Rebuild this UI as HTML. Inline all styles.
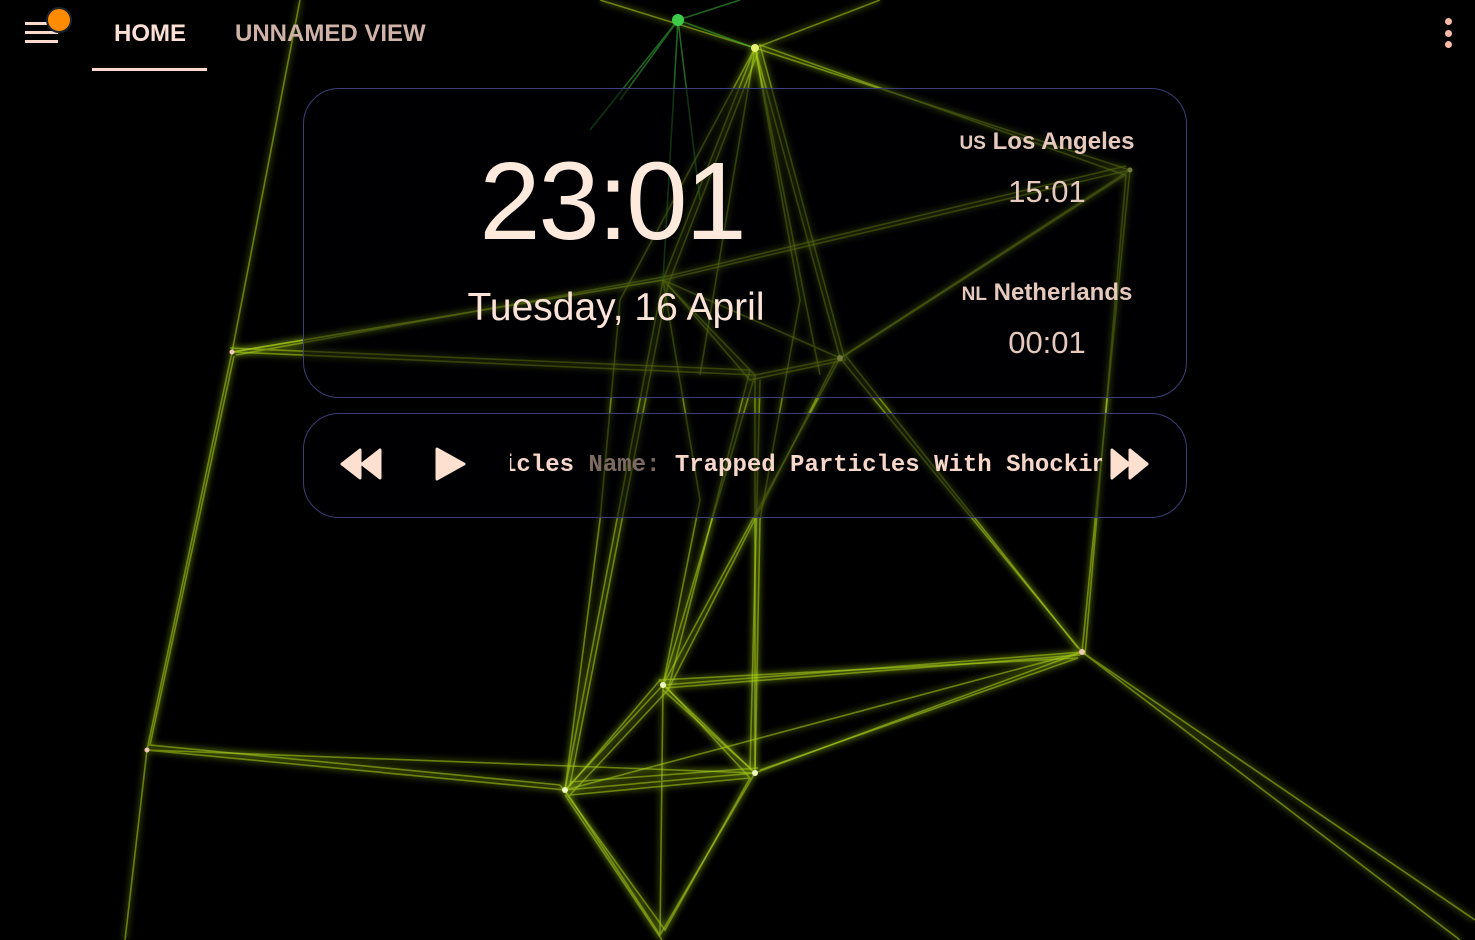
<!DOCTYPE html>
<html><head><meta charset="utf-8"><style>
html,body{margin:0;width:1475px;height:940px;background:#000;overflow:hidden;font-family:"Liberation Sans",sans-serif;color:#fbe3d8}
svg.bg{position:absolute;left:0;top:0}
.card{position:absolute;left:303px;width:882px;border:1px solid #3d3d78;border-radius:36px;background:rgba(0,0,5,0.5)}
.t{position:absolute;white-space:nowrap}
</style></head><body>
<svg class="bg" width="1475" height="940" viewBox="0 0 1475 940">
<defs>
<filter id="b" x="-10%" y="-10%" width="120%" height="120%"><feGaussianBlur stdDeviation="3"/></filter>
<g id="net">
<path d="M755 48L663 280L755 375L840 358L755 48L1130 170L840 358"/>
<path d="M758 52L668 285L750 380L845 360L760 45L1125 175L835 362"/>
<path d="M232 352L663 280L1130 170M232 352L755 375M232 352L147 750L565 790M147 750L755 773"/>
<path d="M236 355L668 276L1126 166M230 348L750 370M234 356L150 745L560 785"/>
<path d="M663 685L565 790L755 773L663 685L1082 652L755 773M565 790L660 935L755 773M663 685L660 935"/>
<path d="M668 690L570 795L750 778L660 680L1078 658L760 770M560 785L665 930L750 778"/>
<path d="M660 680L568 788M663 690L752 770M570 782L758 768M665 688L1080 655M565 795L662 940"/>
<path d="M755 375L663 685M840 358L1082 652M755 375L755 773M663 280L565 790M840 358L663 685M1130 170L1082 652"/>
<path d="M750 370L668 690M845 355L1078 648M760 380L750 770M668 285L570 785M835 362L668 690M1126 175L1085 655"/>
<path d="M1082 652L1475 920M1082 652L1460 940M755 48L600 0M755 48L880 0M663 280L232 352M755 48L700 375"/>
<path d="M147 750L125 940M232 352L300 0M755 48L820 375M663 280L840 358M565 790L1082 652"/>
<path d="M755 48L620 300L600 520L565 790M755 48L800 300L760 520L755 773M663 280L700 500L663 685"/>
</g>
</defs>
<g fill="none">
<use href="#net" stroke="rgba(150,190,20,0.25)" stroke-width="6" filter="url(#b)"/>
<use href="#net" stroke="rgba(170,205,25,0.55)" stroke-width="1.6"/>
<g stroke="rgba(60,200,60,0.5)" stroke-width="1.6">
<path d="M678 20L755 48M678 20L663 280M678 20L620 100M678 20L700 200M678 20L590 130M678 20L740 0"/>
</g>
</g>
<g fill="#e6f070">
<circle cx="678" cy="20" r="6" fill="#3ccc4a"/><circle cx="755" cy="48" r="4"/>
<circle cx="232" cy="352" r="2.5" fill="#f0c8b8"/><circle cx="147" cy="750" r="2.5" fill="#f0c8b8"/>
<circle cx="663" cy="685" r="3" fill="#eef6c0"/><circle cx="565" cy="790" r="3" fill="#eef6c0"/><circle cx="755" cy="773" r="3" fill="#eef6c0"/>
<circle cx="1082" cy="652" r="3" fill="#f0c8b8"/><circle cx="840" cy="358" r="3"/><circle cx="1130" cy="170" r="2.5"/>
</g>
</svg>

<div style="position:absolute;left:25px;top:22px;width:33px;height:3px;background:#fbd9cc"></div>
<div style="position:absolute;left:25px;top:31px;width:33px;height:3px;background:#fbd9cc"></div>
<div style="position:absolute;left:25px;top:40px;width:33px;height:3px;background:#fbd9cc"></div>
<div style="position:absolute;left:46px;top:7px;width:22px;height:22px;border-radius:50%;background:#ff8c00;border:2px solid #1a2530"></div>
<div class="t" style="left:114px;top:20px;font-size:24px;font-weight:bold;color:#fbe0d6">HOME</div>
<div class="t" style="left:235px;top:20px;font-size:24px;font-weight:bold;color:#cfb3a8">UNNAMED VIEW</div>
<div style="position:absolute;left:92px;top:68px;width:115px;height:3px;background:#fbd9cc"></div>
<div style="position:absolute;left:1445px;top:18px;width:7px;height:7px;border-radius:50%;background:#fbb9a8"></div>
<div style="position:absolute;left:1445px;top:30px;width:7px;height:7px;border-radius:50%;background:#fbb9a8"></div>
<div style="position:absolute;left:1445px;top:41px;width:7px;height:7px;border-radius:50%;background:#fbb9a8"></div>

<div class="card" style="top:88px;height:308px"></div>
<div class="t" style="left:462px;top:138px;width:300px;text-align:center;font-size:110px;color:#fdeadd;letter-spacing:-2px">23:01</div>
<div class="t" style="left:416px;top:286px;width:400px;text-align:center;font-size:39px;color:#fbe3d8">Tuesday, 16 April</div>
<div class="t" style="left:947px;top:128px;width:200px;text-align:center;font-size:24px;font-weight:bold;color:#e6c9bd"><span style="font-size:19px">US</span> Los Angeles</div>
<div class="t" style="left:947px;top:174px;width:200px;text-align:center;font-size:31px;color:#e6c9bd">15:01</div>
<div class="t" style="left:947px;top:279px;width:200px;text-align:center;font-size:24px;font-weight:bold;color:#e6c9bd"><span style="font-size:19px">NL</span> Netherlands</div>
<div class="t" style="left:947px;top:325px;width:200px;text-align:center;font-size:31px;color:#e6c9bd">00:01</div>

<div class="card" style="top:413px;height:103px"></div>
<svg style="position:absolute;left:340px;top:446px" width="44" height="36"><path d="M2 18L20 4V32Z M22 18L40 4V32Z" fill="#fde0cf" stroke="#fde0cf" stroke-width="3" stroke-linejoin="round"/></svg>
<svg style="position:absolute;left:434px;top:446px" width="34" height="36"><path d="M3 3L30 18L3 33Z" fill="#fde0cf" stroke="#fde0cf" stroke-width="3" stroke-linejoin="round"/></svg>
<div style="position:absolute;left:510px;top:446px;width:592px;height:40px;overflow:hidden">
<div class="t" style="left:-8px;top:6px;font-family:'Liberation Mono',monospace;font-size:24px;font-weight:bold;color:#f6d7c9">icles <span style="color:#7d6a62">Name:</span> Trapped Particles With Shocking</div>
</div>
<svg style="position:absolute;left:1109px;top:446px" width="42" height="36"><path d="M3 4L20 18L3 32Z M21 4L38 18L21 32Z" fill="#fde0cf" stroke="#fde0cf" stroke-width="3" stroke-linejoin="round"/></svg>
</body></html>
